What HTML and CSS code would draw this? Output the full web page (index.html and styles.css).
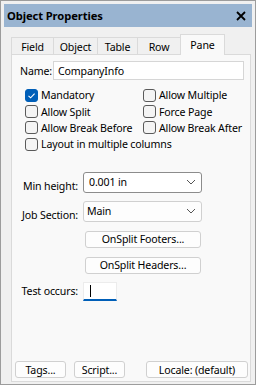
FILE: index.html
```html
<!DOCTYPE html>
<html>
<head>
<meta charset="utf-8">
<link rel="stylesheet" href="styles.css">
</head>
<body>
<div class="window">
  <div class="titlebar">
    <span class="title">Object Properties</span>
    <svg class="close" width="10" height="10" viewBox="0 0 10 10"><path d="M1 1 L9 9 M9 1 L1 9" stroke="#000" stroke-width="1.8"/></svg>
  </div>
  <div class="content">
    <div class="tabs">
      <div class="tab t-field">Field</div>
      <div class="tab t-object">Object</div>
      <div class="tab t-table">Table</div>
      <div class="tab t-row">Row</div>
      <div class="tab t-pane active">Pane</div>
    </div>
    <div class="panel">
      <div class="name-row">
        <span class="lbl">Name:</span>
        <div class="textbox">CompanyInfo</div>
      </div>
      <div class="checks">
        <label class="chk"><span class="box checked"><svg width="13" height="13" viewBox="0 0 13 13"><path d="M3.5 6.8 L5.6 8.8 L9.6 4.6" fill="none" stroke="#fff" stroke-width="1.1"/></svg></span>Mandatory</label>
        <label class="chk"><span class="box"></span>Allow Multiple</label>
        <label class="chk"><span class="box"></span>Allow Split</label>
        <label class="chk"><span class="box"></span>Force Page</label>
        <label class="chk"><span class="box"></span>Allow Break Before</label>
        <label class="chk"><span class="box"></span>Allow Break After</label>
        <label class="chk wide"><span class="box"></span>Layout in multiple columns</label>
      </div>
      <div class="form">
        <span class="flbl">Min height:</span>
        <div class="combo focus"><span>0.001 in</span><svg width="10" height="6" viewBox="0 0 10 6"><path d="M1 1 L5 5 L9 1" fill="none" stroke="#555" stroke-width="1"/></svg></div>
        <span class="flbl">Job Section:</span>
        <div class="combo"><span>Main</span><svg width="10" height="6" viewBox="0 0 10 6"><path d="M1 1 L5 5 L9 1" fill="none" stroke="#555" stroke-width="1"/></svg></div>
        <span></span>
        <div class="btn mid">OnSplit Footers...</div>
        <span></span>
        <div class="btn mid">OnSplit Headers...</div>
        <span class="flbl">Test occurs:</span>
        <div class="small-input"><span class="caret"></span></div>
      </div>
      <div class="bottom">
        <div class="btn b-tags">Tags...</div>
        <div class="btn b-script">Script...</div>
        <div class="btn b-locale">Locale: (default)</div>
      </div>
    </div>
  </div>
</div>
</body>
</html>
```
FILE: styles.css
```css
html, body {
  margin: 0;
  padding: 0;
  background: #ffffff;
}
body {
  font-family: "Noto Sans", "DejaVu Sans", sans-serif;
  font-size: 10.6px;
  letter-spacing: -0.15px;
  color: #000;
  white-space: nowrap;
}
.window {
  box-sizing: border-box;
  width: 256px;
  height: 385px;
  border: 1px solid #9c9c9c;
  background: #f0f0f0;
  padding: 3px 3px 0 3px;
  display: flex;
  flex-direction: column;
}
.titlebar {
  height: 23px;
  background: #99b4d1;
  display: flex;
  align-items: center;
  justify-content: space-between;
  padding: 0 6px 0 3px;
}
.title {
  font-weight: bold;
  font-size: 11.2px;
  letter-spacing: -0.1px;
}
.close { display: block; }
.content {
  flex: 1;
  display: flex;
  flex-direction: column;
  padding: 7px 0 2px 7px;
}
.tabs {
  display: flex;
  align-items: flex-end;
  height: 20px;
  position: relative;
  z-index: 1;
}
.tab {
  box-sizing: border-box;
  height: 17px;
  border: 1px solid #dadada;
  border-bottom: none;
  border-right: none;
  background: #f0f0f0;
  display: flex;
  align-items: center;
  justify-content: center;
  padding-top: 1px;
}
.t-field { width: 42px; }
.t-object { width: 44px; }
.t-table { width: 40px; }
.t-row { width: 43px; }
.t-pane {
  width: 45px;
  height: 21px;
  border-right: 1px solid #dadada;
  background: #f9f9f9;
  margin-bottom: -1px;
  padding-bottom: 2px;
}
.panel {
  flex: 1;
  box-sizing: border-box;
  margin-right: 1px;
  border: 1px solid #dadada;
  background: #f9f9f9;
  display: flex;
  flex-direction: column;
  padding: 6px 0 3px 0;
}
.name-row {
  display: flex;
  align-items: center;
  padding-left: 8px;
}
.lbl { width: 33px; }
.textbox {
  box-sizing: border-box;
  width: 191px;
  height: 19px;
  border: 1px solid #d6d6d6;
  background: #fff;
  padding: 0 4px;
  display: flex;
  align-items: center;
}
.checks {
  display: grid;
  grid-template-columns: 118px auto;
  grid-auto-rows: 16.4px;
  margin: 7px 0 0 13px;
}
.chk {
  display: flex;
  align-items: center;
}
.chk.wide { grid-column: 1 / 3; }
.box {
  box-sizing: border-box;
  width: 13px;
  height: 13px;
  border: 1px solid #5a5a5a;
  border-radius: 3px;
  background: #f4f4f4;
  margin-right: 3px;
  display: flex;
}
.box.checked {
  background: #005fb8;
  border-color: #005fb8;
}
.box svg { margin: -1px; }
.form {
  display: grid;
  grid-template-columns: 66px 119px;
  column-gap: 5px;
  align-items: center;
  margin-top: 19px;
}
.flbl {
  text-align: right;
}
.combo {
  box-sizing: border-box;
  height: 21px;
  border: 1px solid #d0d0d0;
  border-radius: 3px;
  background: #fdfdfd;
  display: flex;
  align-items: center;
  justify-content: space-between;
  padding: 0 5px 0 3px;
  margin-bottom: 8px;
}
.combo.focus {
  border-color: #8c8c8c;
  background: #fff;
  padding-left: 5px;
}
.btn {
  box-sizing: border-box;
  height: 17px;
  border: 1px solid #d0d0d0;
  border-radius: 3px;
  background: #fdfdfd;
  display: flex;
  align-items: center;
  justify-content: center;
}
.btn.mid {
  width: 116px;
  margin: 1px 0 8px 2px;
}
.small-input {
  box-sizing: border-box;
  width: 34px;
  height: 19px;
  background: #fff;
  border: 1px solid #ececec;
  border-bottom: 2px solid #005fb8;
  display: flex;
  align-items: center;
  padding-left: 6px;
}
.caret {
  width: 1px;
  height: 12px;
  background: #000;
}
.bottom {
  margin-top: auto;
  display: flex;
  padding-left: 3px;
}
.b-tags { width: 51px; }
.b-script { width: 51px; margin-left: 8px; }
.b-locale { width: 102px; margin-left: 21px; }
```
